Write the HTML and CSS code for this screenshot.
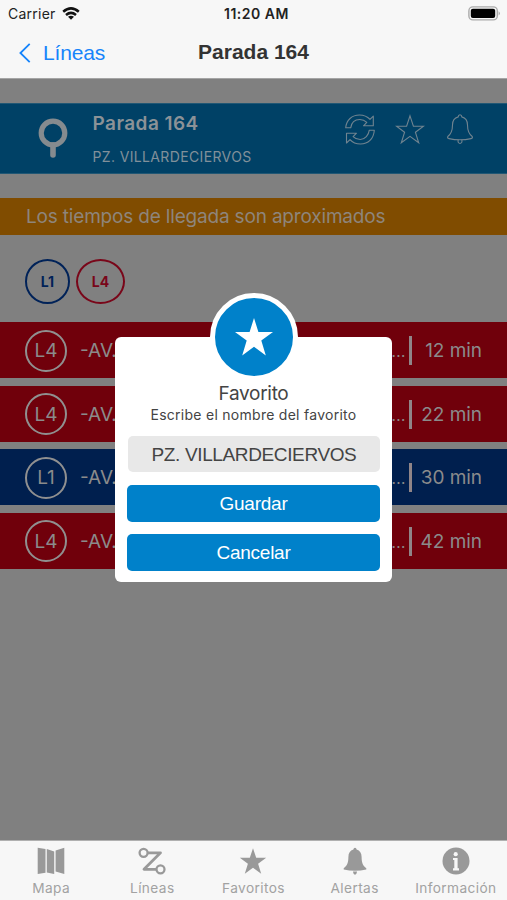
FILE: index.html
```html
<!DOCTYPE html>
<html lang="es">
<head>
<meta charset="utf-8">
<title>Parada 164</title>
<link rel="stylesheet" href="styles.css">
</head>
<body>
<div class="phone">
  <header class="top">
    <div class="status">
      <span class="carrier">Carrier</span>
      <svg class="wifi" viewBox="0 0 18 13" width="18" height="13"><g fill="none" stroke="#111" stroke-width="2.5"><path d="M1.2 4.8Q9-2 16.8 4.8"/><path d="M4 8Q9 3.8 14 8"/></g><path d="M6 9.8Q9 7.5 12 9.8L9 12.8Z" fill="#111"/></svg>
      <span class="clock">11:20 AM</span>
      <svg class="battery" viewBox="0 0 33 15" width="33" height="15"><rect x=".9" y=".9" width="28.4" height="13" rx="4" fill="none" stroke="#aaa" stroke-width="1.4"/><rect x="2.8" y="2.8" width="24.4" height="9.2" rx="2" fill="#000"/><path d="M30.6 5.2Q33.2 7.4 30.6 9.6Z" fill="#aaa"/></svg>
    </div>
    <div class="nav">
      <a class="back"><svg viewBox="0 0 12 20" width="12" height="20"><path d="M10.7 .8L1.4 10L10.7 19.2" fill="none" stroke="#1684fb" stroke-width="1.8"/></svg><span>Líneas</span></a>
      <h1>Parada 164</h1>
    </div>
  </header>

  <main class="content">
    <section class="stop">
      <svg class="pin" viewBox="0 0 30 41" width="30" height="41"><circle cx="15" cy="15" r="11.8" fill="none" stroke="#858b8f" stroke-width="5.2"/><path d="M15 27V37" stroke="#858b8f" stroke-width="5.6" stroke-linecap="round"/></svg>
      <div class="stop-text"><h2>Parada 164</h2><p>PZ. VILLARDECIERVOS</p></div>
      <div class="actions">
        <svg viewBox="0 0 30 31" width="30" height="31"><g fill="none" stroke="#708490" stroke-width="1.1" stroke-linejoin="round"><path d="M.7 13.8C1.3 6 7 1 14.5 1C19 1 22.5 2.7 25 5.4L28.3 2.2V11.8H18.5L21.8 8.4C19.8 6.4 17.6 5.5 14.8 5.5C9.8 5.5 6.4 8.8 5.7 13.8Z"/><path d="M29.3 16.2C28.7 25 23 30 15.5 30C11 30 7.5 28.4 5 25.6L1.5 29V19.2H11.5L8.1 22.6C10.1 24.6 12.4 25.5 15.2 25.5C20.2 25.5 23.6 21.2 24.3 16.2Z"/></g></svg>
        <svg viewBox="0 0 30 31" width="30" height="31"><path d="M15 1.8L18.4 12.2H28.5L20.4 18.2L23.7 28.8L15 22.4L6.3 28.8L9.6 18.2L1.5 12.2H11.6Z" fill="none" stroke="#708490" stroke-width="1.1"/></svg>
        <svg viewBox="0 0 30 31" width="30" height="31"><g fill="none" stroke="#708490" stroke-width="1.1"><path d="M13.2 2.9Q13.3 .8 15 .8Q16.7 .8 16.8 2.9C20.8 4 22.5 7 22.5 11C22.5 17.5 24.2 20.2 27.2 22.5Q28 24.2 26 24.6Q15 27 4 24.6Q2 24.2 2.8 22.5C5.8 20.2 7.5 17.5 7.5 11C7.5 7 9.2 4 13.2 2.9Z"/><path d="M13.1 25.8V28Q15 31 16.9 28V25.8"/></g></svg>
      </div>
    </section>
    <p class="notice">Los tiempos de llegada son aproximados</p>
    <div class="lines"><span class="chip l1">L1</span><span class="chip l4">L4</span></div>
    <ul class="arrivals">
      <li class="red"><b>L4</b><span class="dest">-AV.</span><span class="dots">...</span><i></i><time>12 min</time></li>
      <li class="red"><b>L4</b><span class="dest">-AV.</span><span class="dots">...</span><i></i><time>22 min</time></li>
      <li class="navy"><b>L1</b><span class="dest">-AV.</span><span class="dots">...</span><i></i><time>30 min</time></li>
      <li class="red"><b>L4</b><span class="dest">-AV.</span><span class="dots">...</span><i></i><time>42 min</time></li>
    </ul>
  </main>

  <footer class="tabs">
    <a><svg viewBox="0 0 28 28" width="28" height="28"><path d="M.7 .8L8.5 2V25.8L.7 27ZM9.8 2L17.2 4.5V27L9.8 25.5ZM18.6 3.4L27.3 .8V27L18.6 24.6Z" fill="#999"/></svg><span>Mapa</span></a>
    <a><svg viewBox="0 0 28 28" width="28" height="28"><g fill="none" stroke="#999" stroke-width="2.3"><circle cx="5.6" cy="5.8" r="4"/><circle cx="22.5" cy="22.3" r="4"/><path d="M9.5 5.8H22.5L6 22.3H18.5" stroke-width="2.8" stroke-linejoin="round"/></g></svg><span>Líneas</span></a>
    <a><svg viewBox="0 0 28 28" width="28" height="28"><path d="M14 1.2L17.2 10.8H27.2L19.1 16.8L22.2 26.8L14 20.7L5.8 26.8L8.9 16.8L.8 10.8H10.8Z" fill="#999"/></svg><span>Favoritos</span></a>
    <a><svg viewBox="0 0 28 28" width="28" height="28"><path d="M12.4 2.4Q12.6 .7 14 .7Q15.4 .7 15.6 2.4C19 3.3 20.6 6 20.6 10C20.6 16 22 18.7 25.3 21.2V22.5Q14 25.2 2.7 22.5V21.2C6 18.7 7.4 16 7.4 10C7.4 6 9 3.3 12.4 2.4ZM12 24.4H16Q15.7 27.5 14 27.5Q12.3 27.5 12 24.4Z" fill="#999"/></svg><span>Alertas</span></a>
    <a><svg viewBox="0 0 28 28" width="28" height="28"><circle cx="14" cy="14" r="13.5" fill="#999"/><circle cx="13.7" cy="7.2" r="2.1" fill="#f7f7f7"/><path d="M11 11H15.6V21.3H17V23.5H11V21.3H12.3V13H11Z" fill="#f7f7f7"/></svg><span>Información</span></a>
  </footer>

  <div class="modal">
    <div class="badge"><svg viewBox="0 0 38 38" width="38" height="38"><path d="M19 0L23.4 13.9H38L26.3 22.4L30.8 37.6L19 28.7L7.2 37.6L11.7 22.4L0 13.9H14.6Z" fill="#fff"/></svg></div>
    <h3>Favorito</h3>
    <p>Escribe el nombre del favorito</p>
    <div class="field">PZ. VILLARDECIERVOS</div>
    <button>Guardar</button>
    <button>Cancelar</button>
  </div>
</div>
</body>
</html>
```
FILE: styles.css
```css
* { box-sizing: border-box; margin: 0; padding: 0; }
body { width: 507px; height: 900px; overflow: hidden; font-family: Inter, "Liberation Sans", sans-serif; }
svg { display: block; flex: none; }
.phone { position: relative; display: flex; flex-direction: column; width: 507px; height: 900px; background: #808080; }
.top { height: 79px; background: #f7f7f7; border-bottom: 1px solid #a5a5a5; }
.status { display: grid; grid-template-columns: 62px 154px 70px 1fr 33px; align-items: center; height: 27px; padding: 0 6px 0 8px; color: #222; font-size: 14px; }
.carrier { letter-spacing: .25px; white-space: nowrap; }
.wifi { margin-left: -8px; }
.clock { grid-column: 3; font-weight: 600; letter-spacing: .5px; white-space: nowrap; }
.battery { grid-column: 5; }
.nav { position: relative; display: flex; justify-content: center; align-items: center; height: 50px; }
.back { position: absolute; left: 19px; top: 16px; display: flex; align-items: center; gap: 12px; color: #1684fb; font: 21px/20px "Liberation Sans", sans-serif; letter-spacing: -.15px; }
.nav h1 { font: bold 21px/24px "Liberation Sans", sans-serif; color: #333; }
.content { flex: 1; padding-top: 24px; color: #8b8b8b; }
.stop { display: flex; height: 71px; background: #004166; border-top: 1px solid #215774; border-bottom: 1px solid #215774; }
.pin { margin: 14px 0 0 38px; }
.stop-text { width: 252px; margin-left: 24.5px; padding-top: 8px; white-space: nowrap; }
.stop h2 { font-size: 19px; line-height: 24px; font-weight: 600; letter-spacing: .45px; color: #8b9297; }
.stop p { margin-top: 11px; font-size: 14px; line-height: 20px; letter-spacing: .36px; color: #81909a; }
.actions { display: flex; gap: 20px; padding-top: 10px; }
.notice { height: 37px; margin-top: 24px; padding-left: 26px; background: #804c00; font-size: 19px; line-height: 37px; letter-spacing: -.18px; color: #8e857b; white-space: nowrap; }
.lines { display: flex; gap: 6px; margin: 24px 0 18px 25px; }
.chip { display: grid; place-items: center; width: 45px; height: 45px; border: 2px solid; border-radius: 50%; font-size: 14px; font-weight: 700; }
.l1 { color: #002258; }
.l4 { width: 49px; color: #790619; }
.arrivals { display: flex; flex-direction: column; gap: 7.6px; list-style: none; }
.arrivals li { display: flex; align-items: center; height: 56px; padding: 1px 25px 0; font-size: 19px; white-space: nowrap; }
.red { background: #70000b; }
.navy { background: #001f4e; }
.arrivals b { display: grid; place-items: center; width: 42px; height: 42px; border: 2px solid #909090; border-radius: 50%; font-weight: 400; }
.dest { width: 311px; margin-left: 13px; }
.dots { width: 14px; font-weight: 300; letter-spacing: -.6px; }
.arrivals i { width: 3px; height: 29px; margin-left: 4px; background: #908588; }
.arrivals time { flex: 1; text-align: right; letter-spacing: -.05px; }
.tabs { display: grid; grid-template-columns: repeat(5, 101.2px); height: 60px; padding-left: .5px; border-top: 1px solid #b0b0b0; background: #f7f7f7; }
.tabs a { display: flex; flex-direction: column; align-items: center; padding-top: 6px; color: #a2a2a2; font-size: 13.7px; line-height: 16px; letter-spacing: .38px; white-space: nowrap; }
.tabs span { margin-top: 5px; }
.modal { position: absolute; left: 115px; top: 337px; width: 277px; height: 245px; padding: 45px 12px 0; border-radius: 6px; background: #fff; color: #444; text-align: center; white-space: nowrap; }
.badge { position: absolute; left: 94.5px; top: -44px; display: grid; place-items: center; width: 88px; height: 88px; border: 5px solid #fff; border-radius: 50%; background: #0081ca; }
.modal h3 { font-size: 19px; line-height: 24px; font-weight: 400; letter-spacing: -.3px; }
.modal p { font-size: 14px; line-height: 18px; letter-spacing: .27px; }
.field { display: flex; align-items: center; justify-content: center; height: 36px; margin: 12px 0 13px 1px; padding-top: 1px; border-radius: 5px; background: #e8e8e8; font: 19px "Liberation Sans", sans-serif; letter-spacing: -.37px; }
.modal button { display: block; width: 253px; height: 37px; margin-bottom: 12px; border: 0; border-radius: 5px; background: #0081ca; color: #fff; font: 19px "Liberation Sans", sans-serif; letter-spacing: -.25px; }
```
